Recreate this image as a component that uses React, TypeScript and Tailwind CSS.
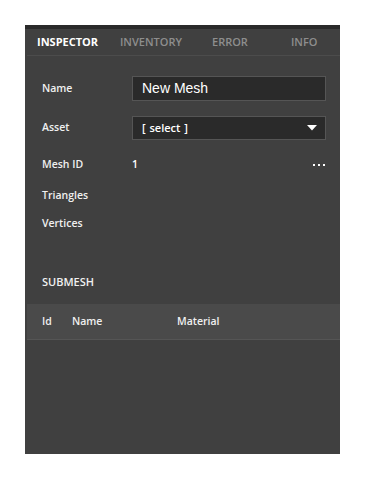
const tabs = [
  { label: 'INSPECTOR', w: 'w-[83px]', active: true },
  { label: 'INVENTORY', w: 'w-[92px]', active: false },
  { label: 'ERROR', w: 'w-[79px]', active: false },
  { label: 'INFO', w: 'w-[40px]', active: false },
];

function Label({ children }: { children: React.ReactNode }) {
  return <div className="w-[90px] shrink-0 text-[10.5px] font-semibold text-[#f0f0f0]">{children}</div>;
}

export default function App() {
  return (
    <div className="min-h-[479px] bg-white pl-[25px] pt-[25px] font-['Open_Sans',sans-serif]">
      <div className="flex h-[429px] w-[315px] flex-col bg-[#404040]">
        <div className="h-[4px] bg-[#2a2a2a]" />

        {/* tabs */}
        <div className="ml-[2px] flex h-[27px] items-center border-b border-[#4c4c4c] pl-[10px]">
          {tabs.map((t) => (
            <div
              key={t.label}
              className={`${t.w} text-[11px] ${t.active ? 'font-bold text-white' : 'font-semibold text-[#8e8e8e]'}`}
            >
              {t.label}
            </div>
          ))}
        </div>

        <div className="flex flex-col pl-[17px] pr-[14px]">
          <div className="mt-[20px] flex h-[25px] items-center">
            <Label>Name</Label>
            <div className="flex h-full flex-1 items-center border border-[#555] bg-[#2a2a2a] pl-[9px] font-['Liberation_Sans',sans-serif] text-[14px] text-white">
              New Mesh
            </div>
          </div>

          <div className="mt-[15px] flex h-[24px] items-center">
            <Label>Asset</Label>
            <div className="flex h-full flex-1 items-center justify-between border border-[#555] bg-[#2a2a2a] pl-[9px] pr-[8px] text-[11px] font-semibold text-white">
              <span className="[word-spacing:1px]">[ select ]</span>
              <svg width="10" height="6" viewBox="0 0 10 6">
                <path d="M0 0h10L5 5.5z" fill="#fff" />
              </svg>
            </div>
          </div>

          <div className="mt-[11px] flex h-[28px] items-center">
            <Label>Mesh ID</Label>
            <div className="flex-1 text-[10.5px] font-semibold text-white">1</div>
            <div className="flex gap-[3px] pr-[1px]">
              <span className="h-[2px] w-[2px] bg-white" />
              <span className="h-[2px] w-[2px] bg-white" />
              <span className="h-[2px] w-[2px] bg-white" />
            </div>
          </div>

          <div className="mt-[3px] flex h-[28px] items-center">
            <Label>Triangles</Label>
          </div>
          <div className="flex h-[28px] items-center">
            <Label>Vertices</Label>
          </div>

          <div className="mt-[32px] flex h-[24px] items-center">
            <div className="text-[11px] font-semibold text-[#f0f0f0]">SUBMESH</div>
          </div>
        </div>

        <div className="ml-[2px] mt-[10px] flex h-[36px] items-center border-b border-[#555] bg-[#4a4a4a] pl-[15px] text-[10.5px] font-semibold text-[#f0f0f0]">
          <span className="w-[30px]">Id</span>
          <span className="w-[105px]">Name</span>
          <span>Material</span>
        </div>
      </div>
    </div>
  );
}
